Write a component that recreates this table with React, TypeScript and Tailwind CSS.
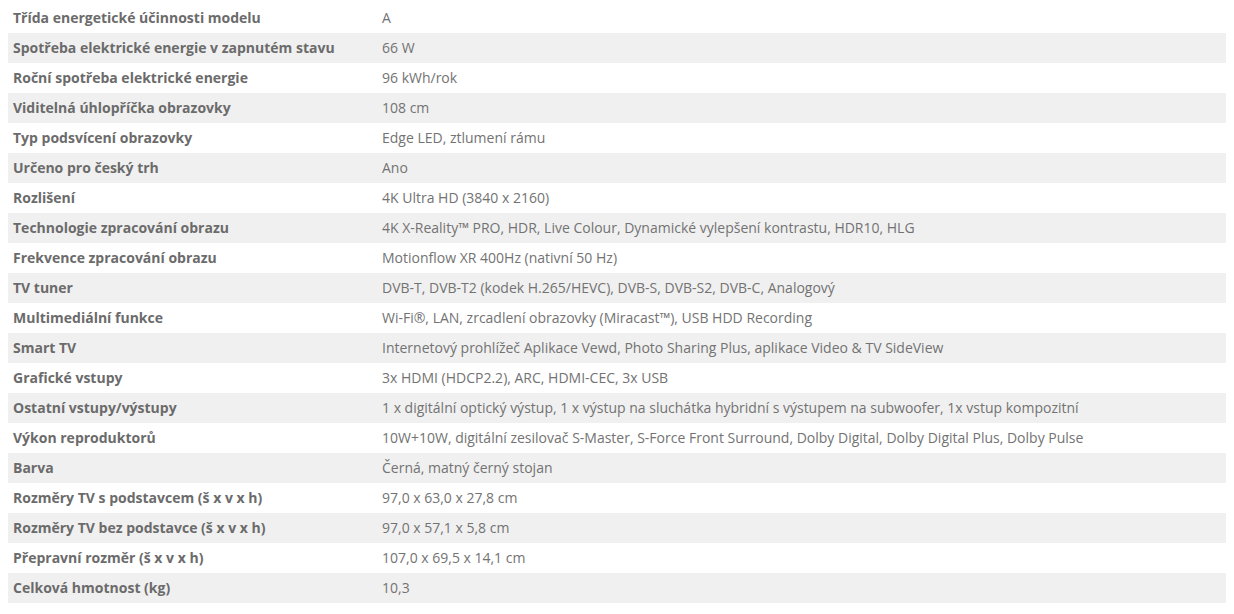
const rows: [string, string][] = [
  ['Třída energetické účinnosti modelu', 'A'],
  ['Spotřeba elektrické energie v zapnutém stavu', '66 W'],
  ['Roční spotřeba elektrické energie', '96 kWh/rok'],
  ['Viditelná úhlopříčka obrazovky', '108 cm'],
  ['Typ podsvícení obrazovky', 'Edge LED, ztlumení rámu'],
  ['Určeno pro český trh', 'Ano'],
  ['Rozlišení', '4K Ultra HD (3840 x 2160)'],
  ['Technologie zpracování obrazu', '4K X-Reality™ PRO, HDR, Live Colour, Dynamické vylepšení kontrastu, HDR10, HLG'],
  ['Frekvence zpracování obrazu', 'Motionflow XR 400Hz (nativní 50 Hz)'],
  ['TV tuner', 'DVB-T, DVB-T2 (kodek H.265/HEVC), DVB-S, DVB-S2, DVB-C, Analogový'],
  ['Multimediální funkce', 'Wi-Fi®, LAN, zrcadlení obrazovky (Miracast™), USB HDD Recording'],
  ['Smart TV', 'Internetový prohlížeč Aplikace Vewd, Photo Sharing Plus, aplikace Video & TV SideView'],
  ['Grafické vstupy', '3x HDMI (HDCP2.2), ARC, HDMI-CEC, 3x USB'],
  ['Ostatní vstupy/výstupy', '1 x digitální optický výstup, 1 x výstup na sluchátka hybridní s výstupem na subwoofer, 1x vstup kompozitní'],
  ['Výkon reproduktorů', '10W+10W, digitální zesilovač S-Master, S-Force Front Surround, Dolby Digital, Dolby Digital Plus, Dolby Pulse'],
  ['Barva', 'Černá, matný černý stojan'],
  ['Rozměry TV s podstavcem (š x v x h)', '97,0 x 63,0 x 27,8 cm'],
  ['Rozměry TV bez podstavce (š x v x h)', '97,0 x 57,1 x 5,8 cm'],
  ['Přepravní rozměr (š x v x h)', '107,0 x 69,5 x 14,1 cm'],
  ['Celková hmotnost (kg)', '10,3'],
];

export default function App() {
  return (
    <div className="bg-white pt-[3px] pl-2 pr-2 min-h-[614px]" style={{ fontFamily: '"Open Sans", sans-serif' }}>
      <table className="w-[1218px] border-collapse text-[14px] text-[#6b6b6b]">
        <tbody>
          {rows.map(([label, value], i) => (
            <tr key={i} className={i % 2 === 1 ? 'bg-[#f0f0f0]' : 'bg-white'}>
              <td className="h-[30px] w-[369px] pl-[5px] pb-[2px] font-bold align-middle">{label}</td>
              <td className="h-[30px] pl-[5px] pb-[2px] align-middle text-[#737373]">{value}</td>
            </tr>
          ))}
        </tbody>
      </table>
    </div>
  );
}
